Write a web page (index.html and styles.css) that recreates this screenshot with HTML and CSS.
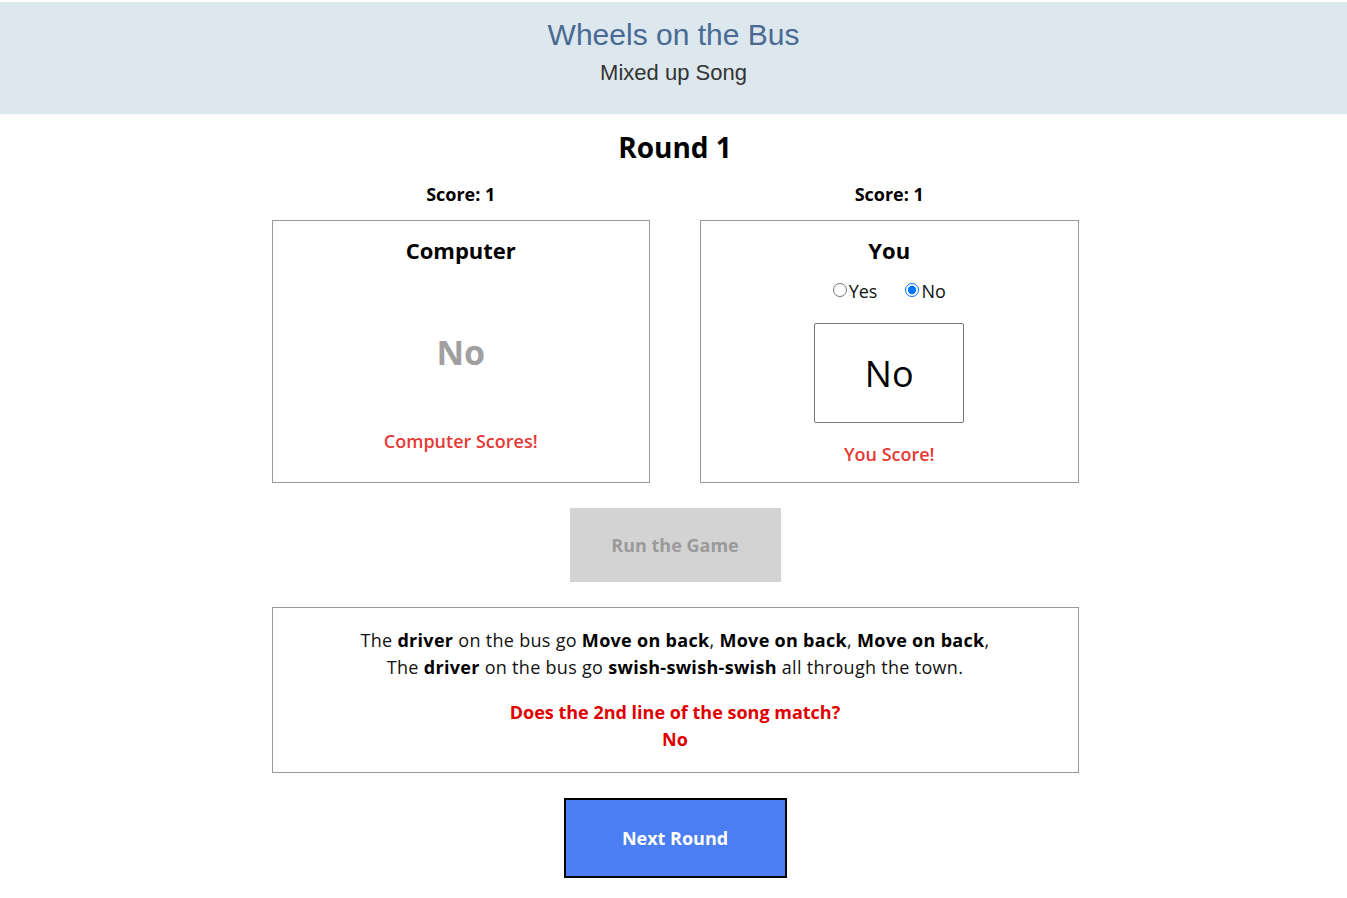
FILE: index.html
```html
<!DOCTYPE html>
<html lang="en">
<head>
<meta charset="utf-8">
<title>Wheels on the Bus</title>
<link rel="stylesheet" href="styles.css">
</head>
<body>
<header class="banner">
  <h1 class="banner-title">Wheels on the Bus</h1>
  <p class="banner-sub">Mixed up Song</p>
</header>
<main class="game">
  <h2 class="round">Round 1</h2>
  <div class="players">
    <section class="player">
      <div class="score">Score: 1</div>
      <div class="card">
        <h3 class="card-title">Computer</h3>
        <div class="comp-answer">No</div>
        <div class="result">Computer Scores!</div>
      </div>
    </section>
    <section class="player">
      <div class="score">Score: 1</div>
      <div class="card">
        <h3 class="card-title">You</h3>
        <div class="choices">
          <label class="choice"><input type="radio" name="ans" value="yes">Yes</label>
          <label class="choice"><input type="radio" name="ans" value="no" checked>No</label>
        </div>
        <div class="you-answer">No</div>
        <div class="result result-you">You Score!</div>
      </div>
    </section>
  </div>
  <button class="run-btn" type="button" disabled>Run the Game</button>
  <div class="song">
    <p class="lyrics">The <b>driver</b> on the bus go <b>Move on back</b>, <b>Move on back</b>, <b>Move on back</b>,<br>The <b>driver</b> on the bus go <b>swish-swish-swish</b> all through the town.</p>
    <p class="question">Does the 2nd line of the song match?<br>No</p>
  </div>
  <button class="next-btn" type="button">Next Round</button>
</main>
</body>
</html>
```
FILE: styles.css
```css
html, body {
  margin: 0;
  padding: 0;
  background: #fff;
}
body {
  font-family: "Open Sans", "Lato", sans-serif;
  color: #111;
  padding-top: 2px;
}
.banner {
  background: #dce7ee;
  height: 112px;
  box-sizing: border-box;
  padding-top: 15px;
  text-align: center;
  font-family: "Liberation Sans", Arial, sans-serif;
}
.banner-title {
  margin: 0;
  font-size: 30px;
  font-weight: normal;
  color: #4a6a93;
  line-height: 36px;
}
.banner-sub {
  margin: 6px 0 0;
  font-size: 22px;
  color: #333;
  line-height: 28px;
}
.game {
  width: 807px;
  margin: 0 auto;
  padding-left: 3px;
  display: flex;
  flex-direction: column;
  align-items: center;
}
.round {
  margin: 14px 0 0;
  font-size: 28px;
  font-weight: 700;
  line-height: 38px;
  color: #000;
}
.players {
  display: flex;
  gap: 50px;
  width: 100%;
  margin-top: 16px;
}
.player {
  flex: 1;
  display: flex;
  flex-direction: column;
  align-items: stretch;
}
.score {
  text-align: center;
  font-weight: 700;
  font-size: 18px;
  line-height: 24px;
  color: #000;
}
.card {
  margin-top: 14px;
  border: 1px solid #999;
  height: 263px;
  box-sizing: border-box;
  display: flex;
  flex-direction: column;
  align-items: center;
  padding-top: 14px;
}
.card-title {
  margin: 0;
  font-size: 22px;
  font-weight: 700;
  line-height: 30px;
  color: #000;
}
.comp-answer {
  margin-top: 66px;
  font-size: 34px;
  font-weight: 700;
  color: #a0a0a0;
  line-height: 42px;
}
.result {
  margin-top: 56px;
  font-size: 18px;
  font-weight: 600;
  color: #e53935;
  line-height: 24px;
}
.result-you {
  margin-top: 19px;
}
.choices {
  display: flex;
  gap: 28px;
  margin-top: 14px;
  font-size: 18px;
  line-height: 24px;
}
.choice {
  display: flex;
  align-items: center;
}
.choice input {
  margin: 0 2px 3px 0;
  width: 14px;
  height: 14px;
}
.you-answer {
  margin-top: 20px;
  width: 150px;
  height: 100px;
  box-sizing: border-box;
  border: 1px solid #777;
  border-radius: 2px;
  display: flex;
  align-items: center;
  justify-content: center;
  font-size: 36px;
  color: #000;
}
.run-btn {
  margin-top: 25px;
  width: 211px;
  height: 74px;
  border: none;
  background: #d3d3d3;
  color: #9a9a9a;
  font-family: inherit;
  font-size: 18px;
  font-weight: 700;
}
.song {
  margin-top: 25px;
  width: 100%;
  box-sizing: border-box;
  border: 1px solid #999;
  height: 166px;
  text-align: center;
  padding-top: 19px;
}
.lyrics {
  margin: 0;
  font-size: 18px;
  line-height: 27px;
  letter-spacing: 0.3px;
  color: #111;
}
.lyrics b {
  font-weight: 700;
  color: #000;
}
.question {
  margin: 18px 0 0;
  font-size: 18px;
  line-height: 27px;
  font-weight: 700;
  color: #e00000;
}
.next-btn {
  margin-top: 25px;
  width: 223px;
  height: 80px;
  border: 2px solid #000;
  background: #4a7ef2;
  color: #fff;
  font-family: inherit;
  font-size: 18px;
  font-weight: 700;
}
```
